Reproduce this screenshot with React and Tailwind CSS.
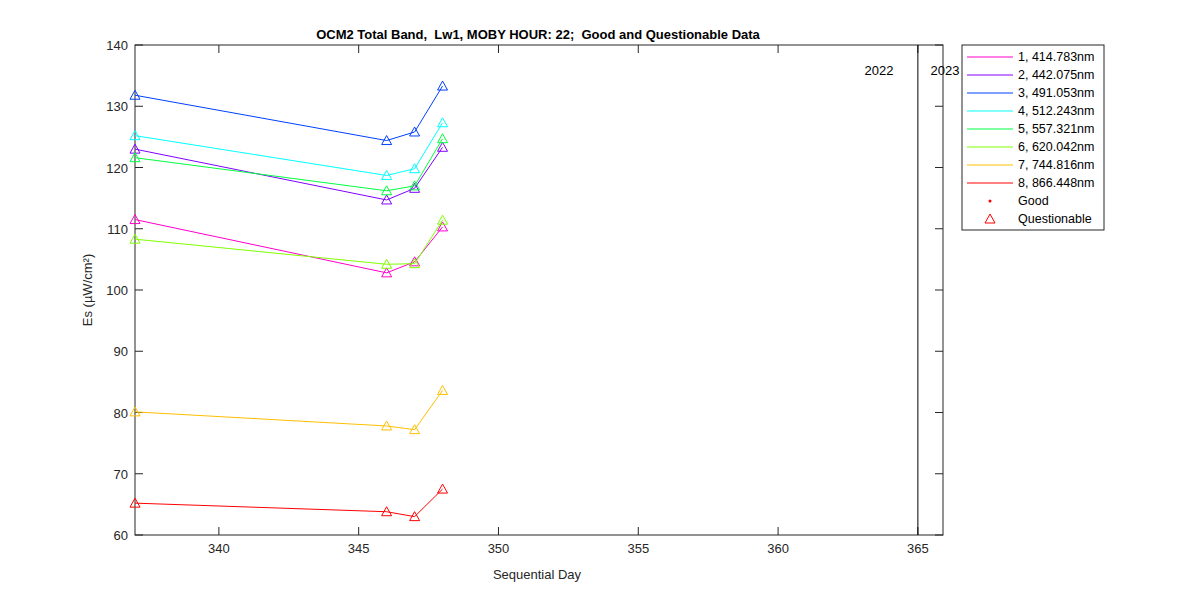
const X0 = 135, X1 = 943, Y0 = 45, Y1 = 535;
const xs = (d) => X0 + (d - 337) * 27.96;
const ys = (v) => Y1 - (v - 60) * 6.125;
const days = [337, 346, 347, 348];

const series = [
  { label: '1, 414.783nm', color: '#ff00cc', v: [111.5, 102.8, 104.6, 110.3] },
  { label: '2, 442.075nm', color: '#8000ff', v: [123.0, 114.7, 116.6, 123.3] },
  { label: '3, 491.053nm', color: '#0040ff', v: [131.8, 124.4, 125.8, 133.3] },
  { label: '4, 512.243nm', color: '#00ffff', v: [125.2, 118.7, 119.8, 127.3] },
  { label: '5, 557.321nm', color: '#00ff40', v: [121.6, 116.2, 117.0, 124.7] },
  { label: '6, 620.042nm', color: '#80ff00', v: [108.3, 104.2, 104.3, 111.4] },
  { label: '7, 744.816nm', color: '#ffbf00', v: [80.1, 77.8, 77.2, 83.6] },
  { label: '8, 866.448nm', color: '#ff0000', v: [65.2, 63.8, 63.0, 67.5] },
];

const tri = (x, y, c, k) => (
  <polygon key={k} points={`${x},${y - 5} ${x - 5},${y + 4} ${x + 5},${y + 4}`} fill="none" stroke={c} strokeWidth="1" />
);

export default function App() {
  const xt = [340, 345, 350, 355, 360, 365];
  const yt = [60, 70, 80, 90, 100, 110, 120, 130, 140];
  return (
    <div className="w-[1200px] h-[600px] bg-white" style={{ fontFamily: '"Liberation Sans", Arial, sans-serif' }}>
      <svg width="1200" height="600" className="block">
        <text x="538" y="39" textAnchor="middle" fontSize="13" fontWeight="bold" fill="#000" style={{ whiteSpace: 'pre' }}>
          {'OCM2 Total Band,  Lw1, MOBY HOUR: 22;  Good and Questionable Data'}
        </text>
        <rect x={X0} y={Y0} width={X1 - X0} height={Y1 - Y0} fill="#fff" stroke="#262626" strokeWidth="1" />
        {xt.map((t) => (
          <g key={t}>
            <line x1={xs(t)} x2={xs(t)} y1={Y1} y2={Y1 - 8} stroke="#262626" />
            <line x1={xs(t)} x2={xs(t)} y1={Y0} y2={Y0 + 8} stroke="#262626" />
            <text x={xs(t)} y={Y1 + 18} textAnchor="middle" fontSize="13" fill="#262626">{t}</text>
          </g>
        ))}
        {yt.map((t) => (
          <g key={t}>
            <line x1={X0} x2={X0 + 8} y1={ys(t)} y2={ys(t)} stroke="#262626" />
            <line x1={X1} x2={X1 - 8} y1={ys(t)} y2={ys(t)} stroke="#262626" />
            <text x={X0 - 7} y={ys(t) + 5} textAnchor="end" fontSize="13" fill="#262626">{t}</text>
          </g>
        ))}
        <text x="537" y="579" textAnchor="middle" fontSize="13" fill="#262626">Sequential Day</text>
        <text transform="translate(92,290) rotate(-90)" textAnchor="middle" fontSize="13" fill="#262626">Es (µW/cm²)</text>
        <line x1={xs(365)} x2={xs(365)} y1={Y0} y2={Y1} stroke="#000" />
        <text x="879" y="75" textAnchor="middle" fontSize="13" fill="#000">2022</text>
        <text x="945" y="75" textAnchor="middle" fontSize="13" fill="#000">2023</text>
        {series.map((s, i) => (
          <g key={i}>
            <polyline points={days.map((d, j) => `${xs(d)},${ys(s.v[j])}`).join(' ')} fill="none" stroke={s.color} strokeWidth="1" />
            {days.map((d, j) => tri(xs(d), ys(s.v[j]), s.color, j))}
          </g>
        ))}
        <rect x="962" y="45" width="142" height="185" fill="#fff" stroke="#262626" />
        {series.map((s, i) => (
          <g key={i}>
            <line x1="967" x2="1013" y1={57 + i * 18} y2={57 + i * 18} stroke={s.color} />
            <text x="1018" y={61 + i * 18} fontSize="12.5" fill="#000">{s.label}</text>
          </g>
        ))}
        <circle cx="990" cy="201" r="1.5" fill="#ff0000" />
        <text x="1018" y="205" fontSize="12.5" fill="#000">Good</text>
        {tri(990, 219, '#ff0000', 'q')}
        <text x="1018" y="223" fontSize="12.5" fill="#000">Questionable</text>
      </svg>
    </div>
  );
}
